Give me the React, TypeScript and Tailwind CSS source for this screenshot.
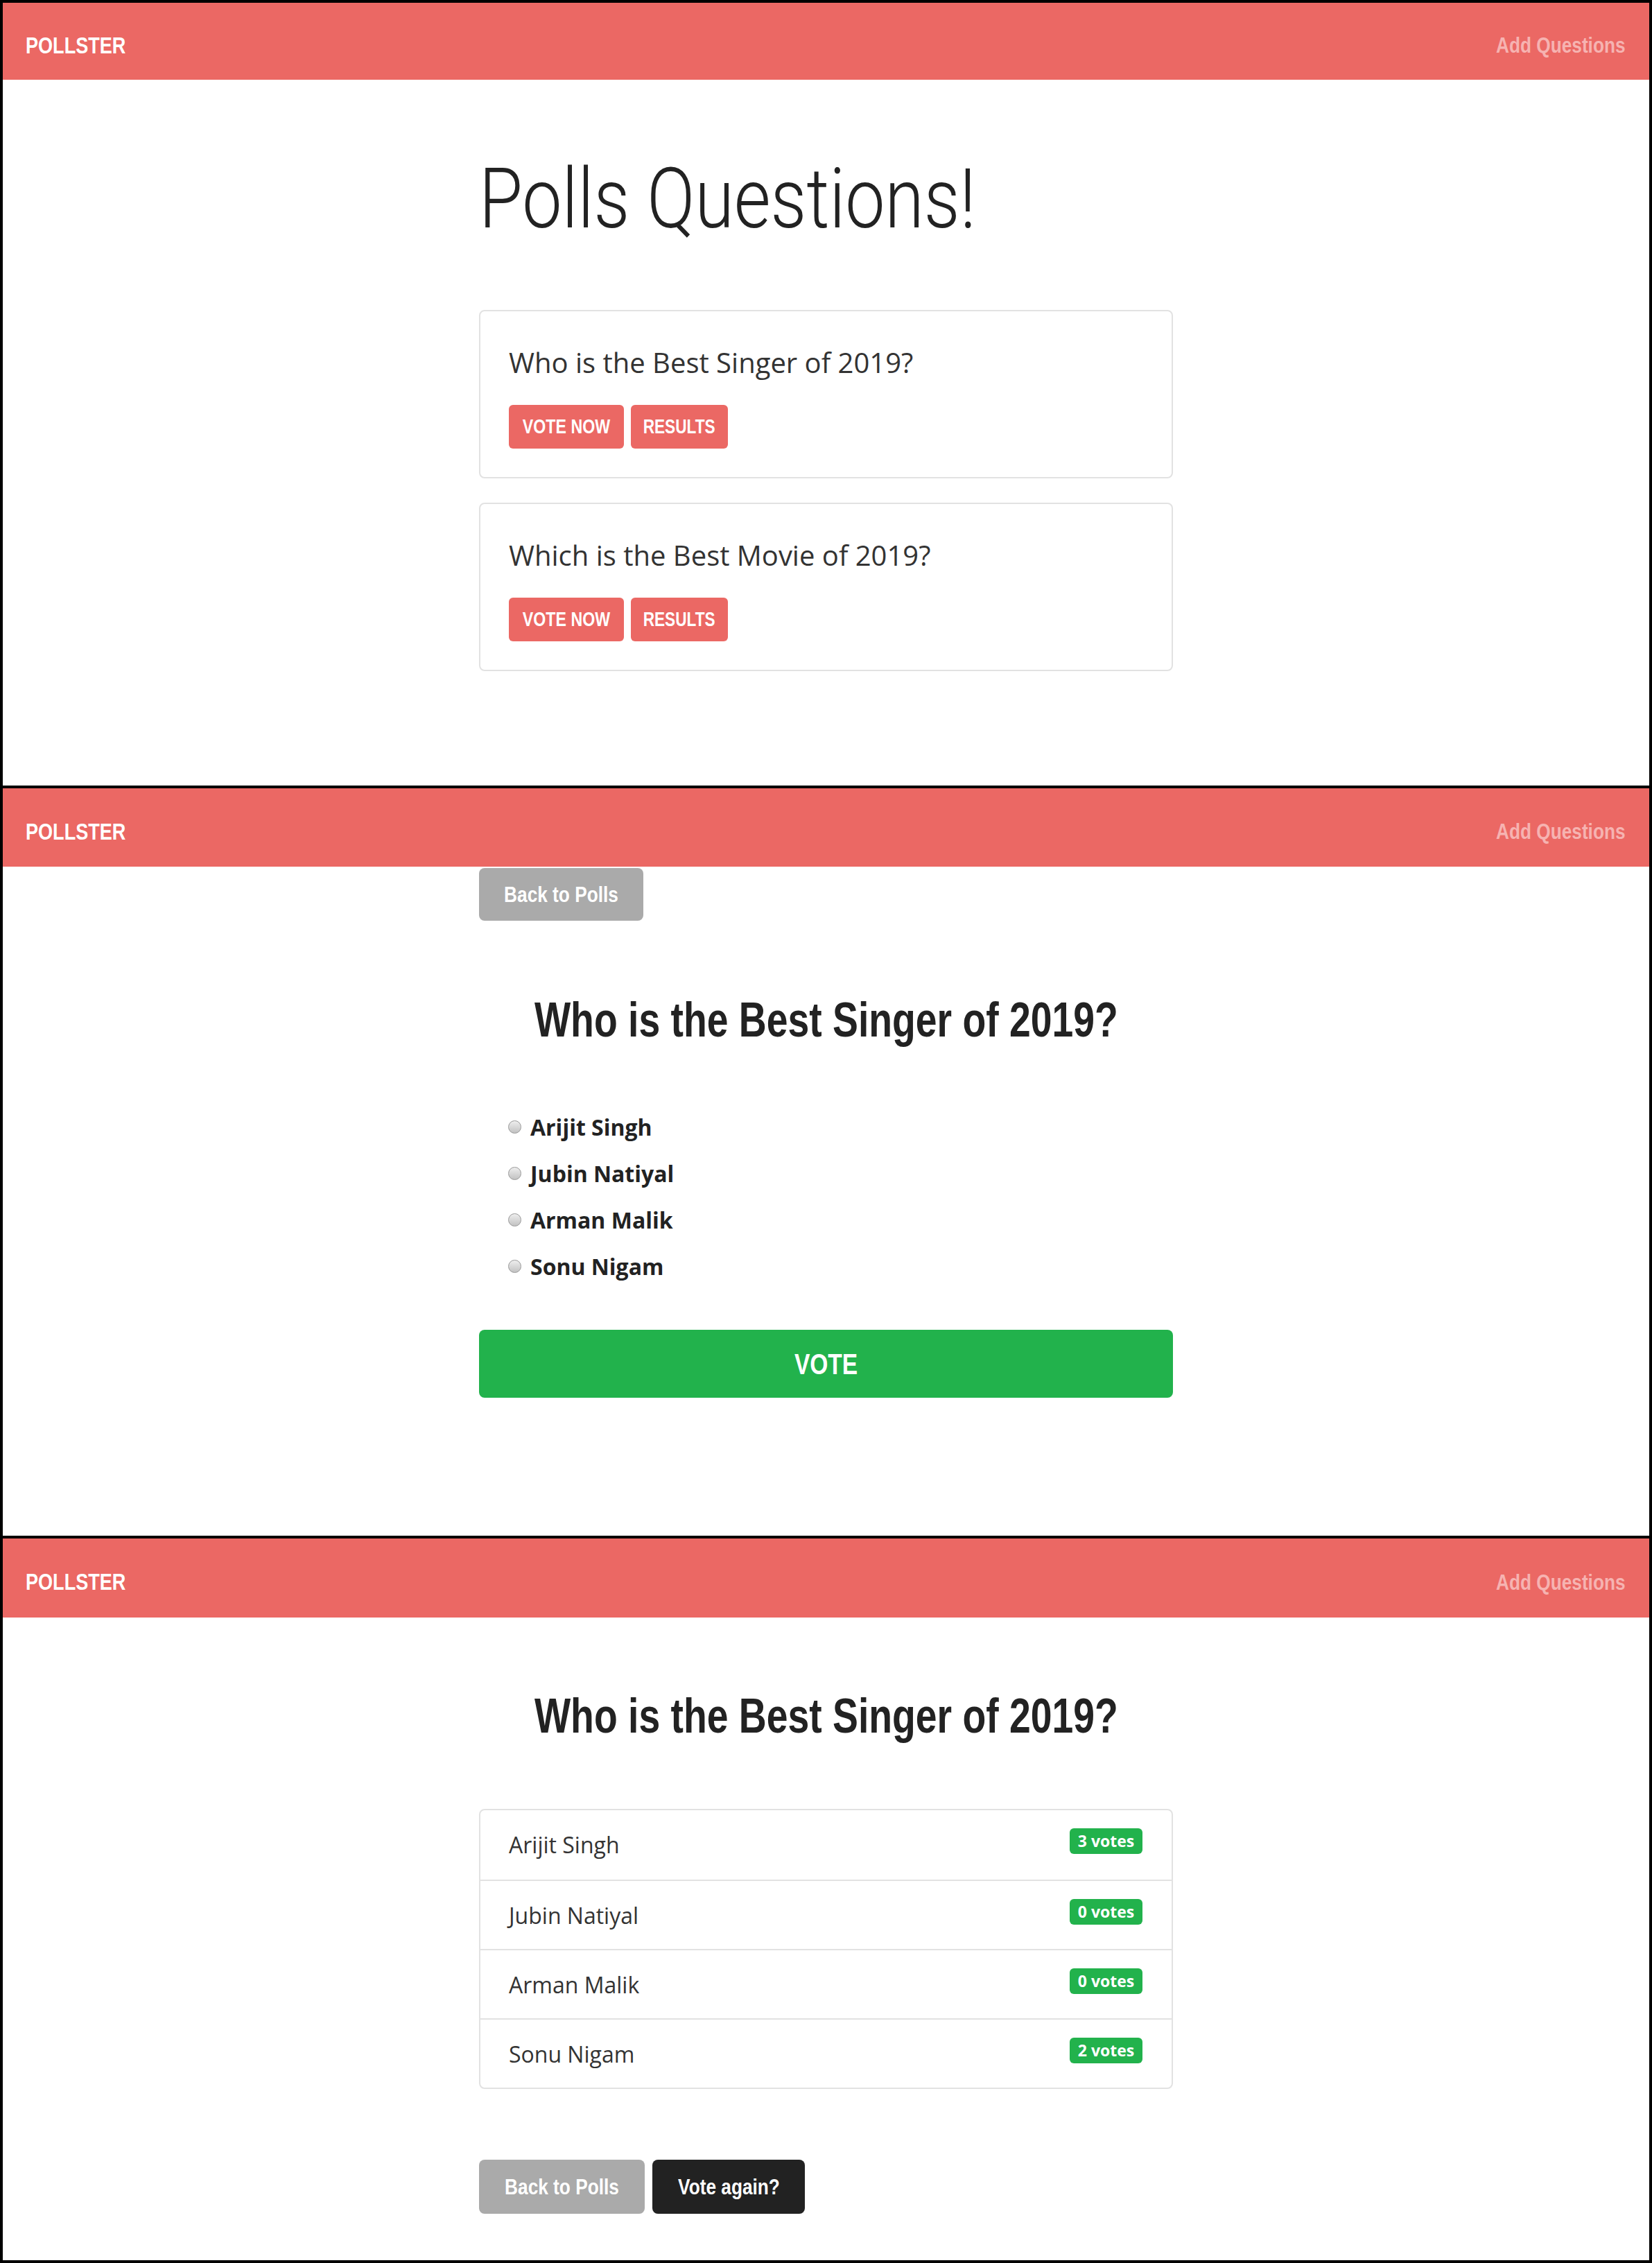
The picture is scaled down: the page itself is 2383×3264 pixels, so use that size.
import type { ReactNode } from 'react';

// No condensed face is installed, so the Journal-style headings use
// Liberation Sans squeezed horizontally (Arial Narrow is Arial at ~82%).
const HEAD = "font-['Liberation_Sans','Arial',sans-serif]";
const BODY = "font-['Open_Sans','Noto_Sans',sans-serif]";

const POLLS = ['Who is the Best Singer of 2019?', 'Which is the Best Movie of 2019?'];

const CHOICES = [
  { name: 'Arijit Singh', votes: 3 },
  { name: 'Jubin Natiyal', votes: 0 },
  { name: 'Arman Malik', votes: 0 },
  { name: 'Sonu Nigam', votes: 2 },
];

const Narrow = ({ children, className = '' }: { children: ReactNode; className?: string }) => (
  <span className={`inline-block whitespace-nowrap scale-x-[0.82] ${className}`}>{children}</span>
);

const Navbar = ({ className }: { className: string }) => (
  <nav className={`${className} bg-[#eb6864] flex items-center justify-between pl-[33px] pr-[34px] pt-[11px]`}>
    <span className={`${HEAD} font-bold text-[33px] leading-none text-white`}>
      <Narrow className="origin-left">POLLSTER</Narrow>
    </span>
    <span className={`${HEAD} font-bold text-[32px] leading-none text-[#f6b3b1]`}>
      <Narrow className="origin-right">Add Questions</Narrow>
    </span>
  </nav>
);

const Panel = ({ className, children }: { className: string; children: ReactNode }) => (
  <section className={`${className} bg-white overflow-hidden`}>{children}</section>
);

const PollCard = ({ question }: { question: string }) => (
  <div className="h-[243px] border-2 border-[#e2e2e2] rounded-[8px] pl-[41px] pt-[48px]">
    <p className={`${BODY} text-[40px] leading-[52px] text-[#333]`}>{question}</p>
    <div className="mt-[35px] flex gap-[10px]">
      <button
        className={`${HEAD} w-[166px] h-[63px] flex items-center justify-center rounded-[6px] bg-[#eb6864] text-white font-bold text-[29px] leading-none`}
      >
        <span className="inline-block whitespace-nowrap scale-x-[0.8]">VOTE NOW</span>
      </button>
      <button
        className={`${HEAD} w-[140px] h-[63px] flex items-center justify-center rounded-[6px] bg-[#eb6864] text-white font-bold text-[29px] leading-none`}
      >
        <span className="inline-block whitespace-nowrap scale-x-[0.78]">RESULTS</span>
      </button>
    </div>
  </div>
);

const Radio = () => (
  <span className="w-[19px] h-[19px] shrink-0 rounded-full border border-[#999999] bg-linear-to-b from-[#eeeeee] to-[#c2c2c2]" />
);

const Question = ({ className }: { className: string }) => (
  <h2 className={`${HEAD} ${className} flex justify-center text-[70px] leading-none font-bold text-[#222]`}>
    <span className="inline-block whitespace-nowrap scale-x-[0.79]">Who is the Best Singer of 2019?</span>
  </h2>
);

export default function App() {
  return (
    <div className="bg-black p-[4px] flex flex-col gap-[4px] text-[#222]">
      {/* poll list */}
      <Panel className="h-[1129px]">
        <Navbar className="h-[111px]" />
        <div className="w-[1001px] mx-auto">
          <h1 className="font-['Roboto','Liberation_Sans',sans-serif] mt-[112px] text-[121px] leading-none font-light text-[#222]">
            <span className="inline-block whitespace-nowrap origin-left scale-x-[0.845]">Polls Questions!</span>
          </h1>
          <div className="mt-[99px] flex flex-col gap-[35px]">
            {POLLS.map((q) => (
              <PollCard key={q} question={q} />
            ))}
          </div>
        </div>
      </Panel>

      {/* vote form */}
      <Panel className="h-[1078px]">
        <Navbar className="h-[113px]" />
        <div className="w-[1001px] mx-auto">
          <button
            className={`${HEAD} mt-[2px] flex items-center justify-center w-[237px] h-[76px] rounded-[8px] bg-[#aaaaaa] text-white font-bold text-[32px] leading-none`}
          >
            <Narrow>Back to Polls</Narrow>
          </button>
          <Question className="mt-[108px]" />
          <div className="mt-[86px] flex flex-col">
            {CHOICES.map((c) => (
              <label key={c.name} className="h-[67px] pl-[42px] flex items-center gap-[13px]">
                <Radio />
                <span className={`${BODY} text-[32px] leading-[67px] font-bold text-[#222]`}>{c.name}</span>
              </label>
            ))}
          </div>
          <button
            className={`${HEAD} mt-[58px] w-full h-[98px] flex items-center justify-center rounded-[8px] bg-[#22b24c] text-white font-bold text-[43px] leading-none`}
          >
            <span className="inline-block scale-x-[0.78]">VOTE</span>
          </button>
        </div>
      </Panel>

      {/* results */}
      <Panel className="h-[1041px]">
        <Navbar className="h-[114px]" />
        <div className="w-[1001px] mx-auto">
          <Question className="mt-[107px]" />
          <ul className="mt-[99px] border-2 border-[#e2e2e2] rounded-[8px]">
            {CHOICES.map((c, i) => (
              <li
                key={c.name}
                className={`${i > 0 ? 'border-t-2 border-[#e2e2e2]' : ''} h-[100px] pl-[41px] pr-[42px] pt-[26px] flex justify-between items-start`}
              >
                <span className={`${BODY} text-[32px] leading-[48px] text-[#333]`}>{c.name}</span>
                <span
                  className={`${BODY} w-[105px] h-[37px] rounded-[6px] bg-[#22b24c] text-white font-bold text-[23px] leading-none flex items-center justify-center`}
                >
                  {c.votes} votes
                </span>
              </li>
            ))}
          </ul>
          <div className="mt-[102px] flex gap-[11px]">
            <button
              className={`${HEAD} w-[239px] h-[78px] flex items-center justify-center rounded-[8px] bg-[#aaaaaa] text-white font-bold text-[32px] leading-none`}
            >
              <Narrow>Back to Polls</Narrow>
            </button>
            <button
              className={`${HEAD} w-[220px] h-[78px] flex items-center justify-center rounded-[8px] bg-[#222222] text-white font-bold text-[32px] leading-none`}
            >
              <Narrow>Vote again?</Narrow>
            </button>
          </div>
        </div>
      </Panel>
    </div>
  );
}
